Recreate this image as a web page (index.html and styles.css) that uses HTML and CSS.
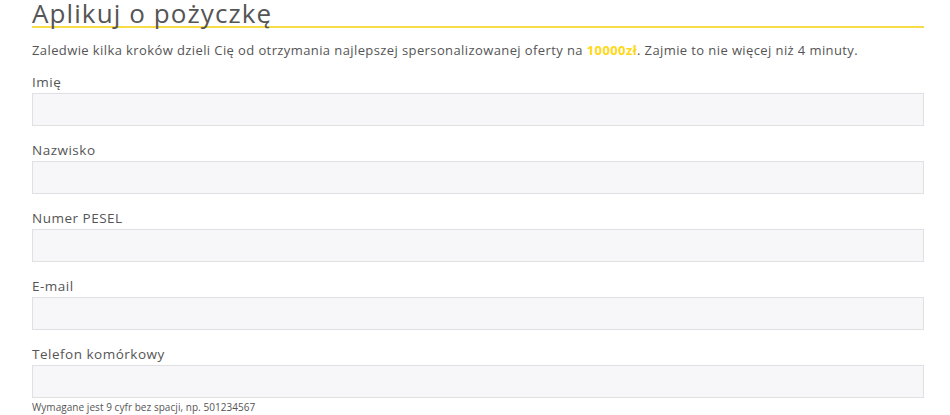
FILE: index.html
```html
<!DOCTYPE html>
<html lang="pl">
<head>
    <meta charset="UTF-8">
    <meta name="viewport" content="width=device-width, initial-scale=1.0">
    <title>Aplikuj o pożyczkę</title>
    <link rel="stylesheet" href="styles.css">
</head>
<body>

    <div class="loan-form">
        <h1>Aplikuj o pożyczkę</h1>

        <p class="intro">Zaledwie kilka kroków dzieli Cię od otrzymania najlepszej spersonalizowanej oferty na <strong>10000zł</strong>. Zajmie to nie więcej niż 4 minuty.</p>

        <!-- Personal data -->
        <div class="field">
            <label for="firstName">Imię</label>
            <input type="text" id="firstName">
        </div>

        <div class="field">
            <label for="lastName">Nazwisko</label>
            <input type="text" id="lastName">
        </div>

        <div class="field">
            <label for="pesel">Numer PESEL</label>
            <input type="text" id="pesel">
        </div>

        <div class="field">
            <label for="email">E-mail</label>
            <input type="email" id="email">
        </div>

        <div class="field">
            <label for="phone">Telefon komórkowy</label>
            <input type="tel" id="phone">
            <div class="hint">Wymagane jest 9 cyfr bez spacji, np. 501234567</div>
        </div>
    </div>

</body>
</html>
```

FILE: styles.css
```css
body {
    margin: 0;
    font-family: "Open Sans", Arial, sans-serif;
    color: #555;
    background: #fff;
}

.loan-form {
    margin: 0 26px 0 32px;
}

h1 {
    margin: 0;
    font-size: 26px;
    font-weight: 400;
    line-height: 26px;
    letter-spacing: 1.1px;
    color: #555;
    border-bottom: 2px solid #f7dc45;
}

.intro {
    margin: 13px 0 14px;
    font-size: 13px;
    line-height: 18px;
    letter-spacing: 0.4px;
}

.intro strong {
    color: #ffd814;
    font-weight: 700;
}

.field {
    margin-bottom: 15px;
}

label {
    display: block;
    font-size: 13.5px;
    line-height: 18px;
    letter-spacing: 0.5px;
    margin-bottom: 2px;
}

input {
    display: block;
    width: 100%;
    height: 33px;
    margin: 0;
    padding: 6px 10px;
    box-sizing: border-box;
    border: 1px solid #e0e0e2;
    border-radius: 0;
    background: #f7f7f9;
    font-family: inherit;
    font-size: 14px;
    color: #555;
}

.hint {
    margin-top: 3px;
    font-size: 10px;
    line-height: 12px;
    letter-spacing: 0.05px;
}
```
